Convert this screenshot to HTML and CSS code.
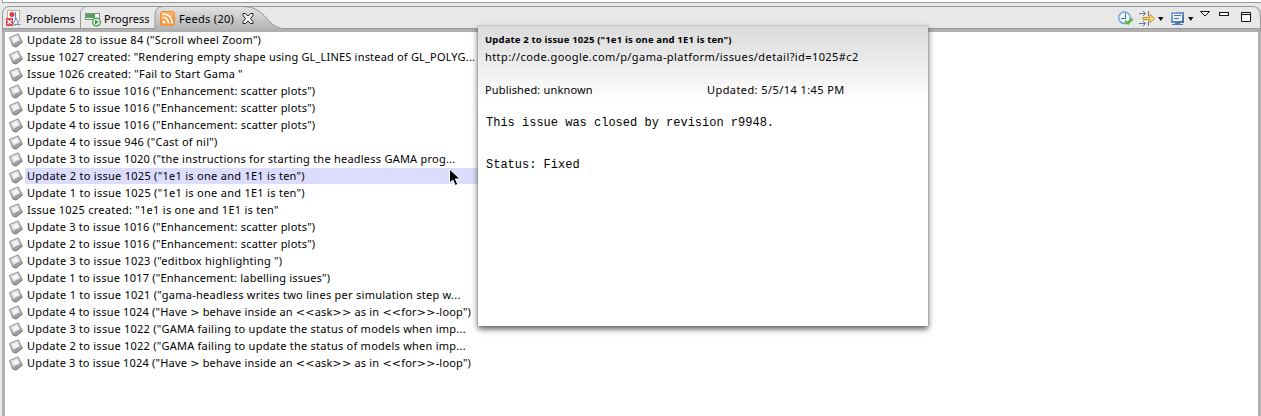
FILE: index.html
```html
<!DOCTYPE html>
<html lang="en">
<head>
<meta charset="utf-8">
<title>Feeds</title>
<link rel="stylesheet" href="styles.css">
</head>
<body>
<div class="strip"></div>
<main class="view">
  <header class="tabs">
    <svg class="frame" width="1261" height="27" viewBox="0 5 1261 27">
      <defs><linearGradient id="tab" x1="0" y1="0" x2="0" y2="1"><stop offset="0" stop-color="#e2e2e2"/><stop offset="1" stop-color="#aeaeae"/></linearGradient></defs>
      <path d="M2.500 32V13Q3 6.500 10 6.500H1254Q1260.500 8 1260.500 17V32" fill="#e8e8e8" stroke="#999"/>
      <path d="M1257 7.500L1260.500 12V17" fill="none" stroke="#b4b4b4" stroke-width="2"/>
      <path d="M3 28.500H155V14Q156 7 163 7H243C257 7 263 14 269 21Q276 28.500 284 28.500H1260V32H3Z" fill="#b0b0b0"/>
      <path d="M155 32V14Q156 7 163 7H243C257 7 263 14 269 21Q276 29 286 29V32Z" fill="url(#tab)"/>
      <path d="M3 28.500H155V14Q156 6.500 163 6.500H243C257 6.500 263 14 269 21Q276 28.500 284 28.500H1260M80.500 28V13Q81.500 7 87 6.500" fill="none" stroke="#999"/>
    </svg>
    <div class="tab problems">
      <svg class="ico" width="16" height="17" viewBox="0 0 16 17"><path d="M1.500 .5H13.500V11L9 15.500H1.500Z" fill="#f4f8ff" stroke="#c4ad90"/><path d="M9.500 2V9L7.500 14M10 8L12.500 13.500" fill="none" stroke="#5b86bd"/><circle cx="6" cy="4.500" r="2.500" fill="#e33b42"/><path d="M8 14.500H14.500" stroke="#718cae"/><rect x="0" y="8" width="7" height="8" fill="#d94750"/><path d="M1.500 10L5.500 14M5.500 10L1.500 14" stroke="#fff" stroke-width="1.200"/></svg>
      <span>Problems</span></div>
    <div class="tab progress">
      <svg class="ico" width="17" height="17" viewBox="0 0 17 17"><rect x=".5" y="3.500" width="14" height="6" fill="#fff" stroke="#78917d"/><rect x="1" y="4" width="9" height="4" fill="#5c9d65"/><circle cx="11.500" cy="12" r="3.800" fill="#fff" stroke="#3f9a4c" stroke-width="1.300"/><path d="M10 9.500L14 12L10 14.500Z" fill="#3f9a4c"/></svg>
      <span>Progress</span></div>
    <div class="tab feeds">
      <svg class="ico" width="15" height="15" viewBox="0 0 15 15"><rect x=".5" y=".5" width="14" height="14" rx="2" fill="#f69b40" stroke="#ed8f3d"/><path d="M1 1H14V6Q7 5 1 9Z" fill="#f9b66b" opacity=".7"/><circle cx="4" cy="11" r="1.500" fill="#fff"/><path d="M2.500 6.500Q8.500 6.500 8.500 12.500M2.500 3Q12 3 12 12.500" fill="none" stroke="#fff" stroke-width="1.700"/></svg>
      <span>Feeds (20)</span>
      <svg class="close" width="12" height="11" viewBox="0 0 12 11"><path d="M1 .5H3.500L6 3L8.500 .5H11V2.500L8.500 5.500L11 8.500V10.500H8.500L6 8L3.500 10.500H1V8.500L3.500 5.500L1 2.500Z" fill="#f4f4f4" stroke="#222"/></svg></div>
    <div class="tools">
      <svg width="161" height="26" viewBox="1100 6 161 26">
        <defs><linearGradient id="mon" x1="0" y1="0" x2="1" y2="1"><stop offset="0" stop-color="#8baee0"/><stop offset="1" stop-color="#3f6cab"/></linearGradient></defs>
        <circle cx="1124.500" cy="17.800" r="5.800" fill="#eef8ff" stroke="#6da9d8" stroke-width="1.500"/><path d="M1125.500 13V18.500H1121" fill="none" stroke="#526b91"/><path d="M1125 21L1128 23.500L1132.500 18.500" fill="none" stroke="#5fb83f" stroke-width="2.400"/>
        <path d="M1139 13.500H1145M1143 11L1145.500 13.500L1143 16M1148.500 11V16M1139 23.500H1145M1143 21L1145.500 23.500L1143 26M1148.500 21V26" fill="none" stroke="#637a98"/><path d="M1143 17.500H1150V14.500L1154.500 18.500L1150 22.500V19.500H1143Z" fill="#ffe18a" stroke="#c68b22"/>
        <path d="M1158 17H1163.500L1160.750 21ZM1188 17H1193.500L1190.750 21Z" fill="#111"/>
        <rect x="1172" y="13" width="11" height="9" fill="#eef4ff" stroke="url(#mon)" stroke-width="2"/><path d="M1174 15.500H1181M1174 18.500H1179" stroke="#536f9b"/><path d="M1175 23.500H1180M1172 24.500H1183" stroke="#5579ad"/>
        <path d="M1200.500 11.500H1209.500L1205 16Z" fill="#fff" stroke="#111"/><rect x="1219.500" y="12.500" width="9" height="3" fill="#fff" stroke="#111"/><path d="M1241.500 12.500H1250.500V21.500H1241.500ZM1241 14.500H1251" fill="#fff" stroke="#111"/>
      </svg>
    </div>
  </header>
  <ul class="list" id="list"></ul>
</main>
<aside class="popup">
  <h1>Update 2 to issue 1025 ("1e1 is one and 1E1 is ten")</h1>
  <p class="url">http://code.google.com/p/gama-platform/issues/detail?id=1025#c2</p>
  <div class="meta"><span>Published: unknown</span><span>Updated: 5/5/14 1:45 PM</span></div>
  <pre>This issue was closed by revision r9948.


Status: Fixed</pre>
</aside>
<svg class="cursor" width="14" height="19" viewBox="0 0 14 19"><path d="M1.500 1V15L4.800 12L7.300 17.500L9.800 16.300L7.400 11H12Z" fill="#000" stroke="#fff"/></svg>
<script src="feeds.js"></script>
</body>
</html>
```
FILE: styles.css
```css
* { box-sizing: border-box; }
body { margin: 0; height: 416px; overflow: hidden; display: flex; flex-direction: column; background: #e8e8e8; color: #000; font: 11px/17px "Noto Sans", sans-serif; }
.strip { height: 3px; margin-left: 2px; background: #fff; border-bottom: 1px solid #999; border-left: 1px solid #999; flex: none; }
.view { margin-top: 2px; flex: 1; min-height: 0; display: flex; flex-direction: column; }
.tabs { height: 27px; flex: none; display: flex; position: relative; }
.frame { position: absolute; left: 0; top: 0; }
.tab { position: relative; display: flex; height: 27px; align-items: flex-start; white-space: nowrap; }
.tab span { margin-top: 5px; }
.problems { width: 80px; padding-left: 6px; }
.problems .ico { margin: 5px 4px 0 0; }
.progress { width: 76px; padding-left: 5px; }
.progress .ico { margin: 5px 2px 0 0; }
.feeds { padding-left: 4px; width: 130px; }
.feeds span { letter-spacing: .3px; }
.feeds .ico { margin: 6px 4px 0 0; }
.feeds .close { margin: 8px 0 0 8px; }
.tools { position: relative; margin-left: auto; padding-top: 1px; }
.list { margin: 0 0 0 2px; padding: 0; flex: 1; list-style: none; background: #fff; border: solid #b0b0b0; border-width: 0 3px; }
.row { height: 17px; display: flex; padding-left: 3px; }
.row svg { flex: none; }
.row .label { height: 16px; line-height: 16px; margin-left: 1px; padding-left: 2px; white-space: pre; }
.row.selected .label { width: 460px; background: #dcdcff; }
.angle { font-family: "DejaVu Sans", sans-serif; }
.popup { position: absolute; left: 478px; top: 26px; width: 450px; height: 300px; padding: 5px 7px; background: linear-gradient(#dadada, #fff 75px); box-shadow: 0 0 1px #777, 0 3px 6px rgba(0,0,0,.65); white-space: nowrap; }
.popup h1 { margin: 0; font-size: 9.500px; line-height: 17px; letter-spacing: .16px; }
.popup p { margin: 0; line-height: 17px; letter-spacing: .415px; }
.meta { display: flex; margin-top: 16px; }
.meta span { letter-spacing: .42px; }
.meta span:first-child { width: 222px; letter-spacing: .16px; }
.popup pre { margin: 18px 0 0 1px; font: 12px/14px "Liberation Mono", monospace; }
.cursor { position: absolute; left: 448px; top: 168px; }
```
FILE: feeds.js
```js
// Each entry is the label and its tracking in pixels.
const items = [
  ['Update 28 to issue 84 ("Scroll wheel Zoom")', .233],
  ['Issue 1027 created: "Rendering empty shape using GL_LINES instead of GL_POLYG...', .19],
  ['Issue 1026 created: "Fail to Start Gama "', .22],
  ['Update 6 to issue 1016 ("Enhancement: scatter plots")', .21],
  ['Update 5 to issue 1016 ("Enhancement: scatter plots")', .21],
  ['Update 4 to issue 1016 ("Enhancement: scatter plots")', .21],
  ['Update 4 to issue 946 ("Cast of nil")', .26],
  ['Update 3 to issue 1020 ("the instructions for starting the headless GAMA prog...', .235],
  ['Update 2 to issue 1025 ("1e1 is one and 1E1 is ten")', .28],
  ['Update 1 to issue 1025 ("1e1 is one and 1E1 is ten")', .28],
  ['Issue 1025 created: "1e1 is one and 1E1 is ten"', .27],
  ['Update 3 to issue 1016 ("Enhancement: scatter plots")', .21],
  ['Update 2 to issue 1016 ("Enhancement: scatter plots")', .21],
  ['Update 3 to issue 1023 ("editbox highlighting ")', .26],
  ['Update 1 to issue 1017 ("Enhancement: labelling issues")', .2],
  ['Update 1 to issue 1021 ("gama-headless writes two lines per simulation step w...', .265],
  ['Update 4 to issue 1024 ("Have > behave inside an <<ask>> as in <<for>>-loop")', .19],
  ['Update 3 to issue 1022 ("GAMA failing to update the status of models when imp...', .24],
  ['Update 2 to issue 1022 ("GAMA failing to update the status of models when imp...', .24],
  ['Update 3 to issue 1024 ("Have > behave inside an <<ask>> as in <<for>>-loop")', .19]
];
const icon = '<svg width="16" height="17" viewBox="0 0 16 17"><path d="M1 5.500L10.500 1.500L15 10L8 15.500L4 14Z" fill="#a2a2a2"/><path d="M1.500 5.500L10 2L13 8.500L5 12.500Z" fill="#dedede" stroke="#999"/><path d="M4.500 6.500L9 4.500L10.500 8L6 10Z" fill="#f6f6f6"/><path d="M5 14L8 15L14.500 10" fill="none" stroke="#777"/></svg>';
const list = document.getElementById('list');
items.forEach(([text, tracking], i) => {
  const row = document.createElement('li');
  row.className = i === 8 ? 'row selected' : 'row';
  row.innerHTML = icon;
  const label = document.createElement('span');
  label.className = 'label';
  label.style.letterSpacing = tracking + 'px';
  text.split(/([<>]+)/).forEach(part => {
    if (/^[<>]/.test(part)) {
      const angle = document.createElement('span');
      angle.className = 'angle';
      angle.textContent = part;
      label.append(angle);
    } else {
      label.append(part);
    }
  });
  row.append(label);
  list.append(row);
});
```
